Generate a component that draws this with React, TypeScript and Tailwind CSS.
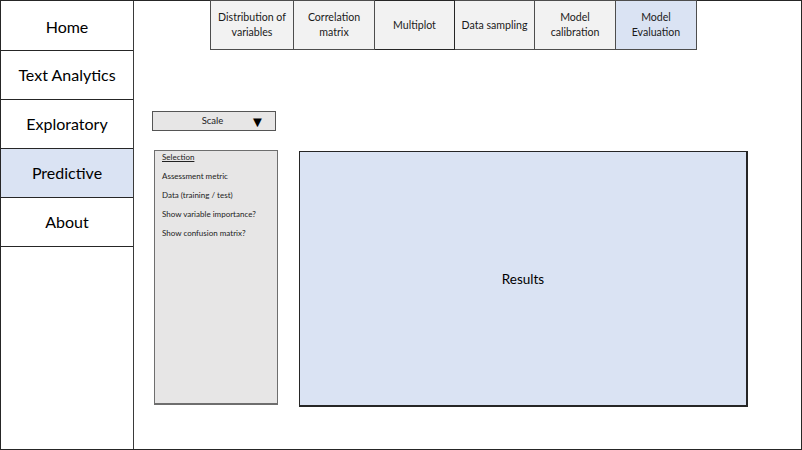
const navItems = ["Home", "Text Analytics", "Exploratory", "Predictive", "About"];

const tabs = [
  { id: "dist", label: ["Distribution of", "variables"], w: "w-[84px]" },
  { id: "corr", label: ["Correlation", "matrix"], w: "w-[81px]" },
  { id: "multi", label: ["Multiplot"], w: "w-[80px]" },
  { id: "sampling", label: ["Data sampling"], w: "w-[80px]" },
  { id: "calib", label: ["Model", "calibration"], w: "w-[81px]" },
  { id: "eval", label: ["Model", "Evaluation"], w: "w-[81px]" },
];

const options = [
  "Assessment metric",
  "Data (training / test)",
  "Show variable importance?",
  "Show confusion matrix?",
];

export default function App() {
  const active = "Predictive";
  const activeTab = "eval";

  return (
    <div className="flex w-[802px] h-[450px] border border-[#262626] bg-white font-[Lato,sans-serif] text-black">
      {/* Side nav */}
      <nav className="w-[133px] shrink-0 border-r border-[#3a3a3a] flex flex-col">
        {navItems.map((item, i) => (
          <div
            key={item}
            className={`flex items-center justify-center border-b border-[#262626] text-[16px] ${
              i === 0 ? "h-[50px] pt-[2px]" : "h-[49px]"
            } ${item === active ? "bg-[#dae3f3]" : "bg-white"}`}
          >
            {item}
          </div>
        ))}
      </nav>

      <main className="flex-1 flex flex-col">
        {/* Tabs */}
        <div className="flex ml-[76px] -mt-px">
          {tabs.map((t, i) => (
            <div
              key={t.id}
              className={`${t.w} h-[50px] flex flex-col items-center justify-center border-y border-r text-[10.6px] leading-[15px] text-[#1a1a1a] ${
                i === 0 ? "border-l" : ""
              } ${t.id === "multi" ? "border-[#262626]" : "border-[#4d4d4d]"} ${
                t.id === activeTab ? "bg-[#dae3f3]" : "bg-[#f2f2f2]"
              }`}
            >
              {t.label.map((l) => (
                <span key={l}>{l}</span>
              ))}
            </div>
          ))}
        </div>

        {/* Scale dropdown */}
        <div className="ml-[18px] mt-[61px] w-[124px] h-[20px] flex items-center border border-[#555] bg-[#e7e6e6] text-[9.5px] text-[#222]">
          <span className="flex-1 text-center pl-[22px]">Scale</span>
          <span className="w-[25px] text-[15px] leading-none text-black">▼</span>
        </div>

        <div className="flex mt-[19px] ml-[20px] gap-[21px]">
          {/* Selection panel */}
          <div className="w-[124px] h-[255px] border border-[#6e6e6e] border-b-2 border-r-[1.5px] bg-[#e7e6e6] pl-[7px] text-[8px] leading-[13px] text-[#222] flex flex-col gap-[6px]">
            <div className="underline">Selection</div>
            {options.map((o) => (
              <div key={o}>{o}</div>
            ))}
          </div>

          {/* Results */}
          <div className="w-[449px] h-[256px] mt-px border border-[#262626] border-r-2 border-b-2 bg-[#dae3f3] flex items-center justify-center pt-[2px] text-[13.5px]">
            Results
          </div>
        </div>
      </main>
    </div>
  );
}
